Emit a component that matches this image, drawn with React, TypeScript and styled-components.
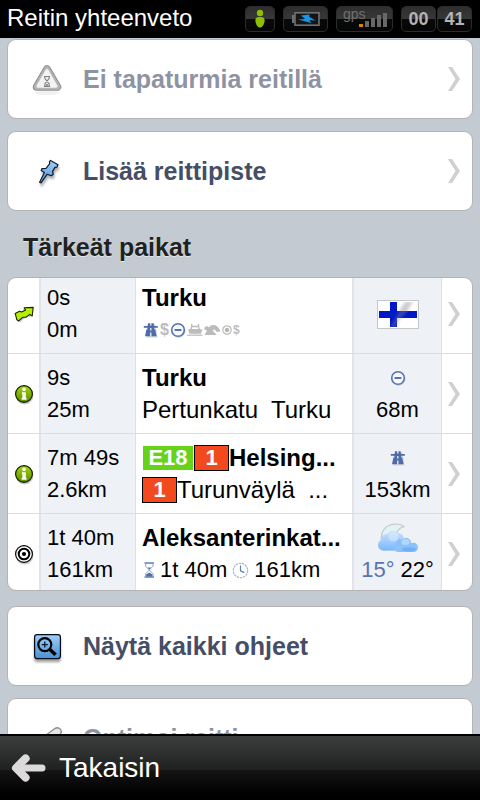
import React from "react";
import styled, { createGlobalStyle, css } from "styled-components";

const GlobalStyle = createGlobalStyle`
  *, *::before, *::after { box-sizing: border-box; }
  html, body { margin: 0; padding: 0; }
  body {
    font-family: "Liberation Sans", Arial, sans-serif;
    background: #c3cad1;
    color: #000;
  }
  svg { display: block; flex: none; }
`;

const Screen = styled.div`
  display: flex;
  flex-direction: column;
  height: 100vh;
`;

/* ---------- status bar ---------- */

const StatusBar = styled.header`
  display: flex;
  align-items: center;
  flex: none;
  height: 38px;
  padding: 0 8px 0 7px;
  background: #000;
  color: #fff;
`;

const Title = styled.h1`
  flex: 1;
  margin: 0;
  font-size: 24px;
  font-weight: 400;
  line-height: 36px;
  height: 38px;
  white-space: nowrap;
`;

const Indicators = styled.div`
  display: flex;
  align-items: center;
  gap: 8px;
`;

const Clock = styled.div`
  display: flex;
  gap: 1px;
`;

const Pill = styled.div<{ $width: number }>`
  display: grid;
  place-items: center;
  width: ${(p) => p.$width}px;
  height: 26px;
  border: 1px solid #2c2c2c;
  border-radius: 5px;
  background: linear-gradient(#2e2e2e 0, #383838 12px, #0a0a0a 12px, #060606 100%);
  color: #b4b4b4;
  font-size: 18px;
  font-weight: 700;
  line-height: 24px;

  > * { grid-area: 1 / 1; }
`;

const GpsLabel = styled.span`
  place-self: start;
  padding-left: 6px;
  color: #707070;
  font-size: 14px;
  font-weight: 400;
  line-height: 14px;
`;

/* ---------- content ---------- */

const Content = styled.main`
  flex: 1;
  min-height: 0;
  overflow-y: auto;
  scrollbar-width: none;
  padding: 1px 7px 12px;
`;

const Menu = styled.nav`
  display: flex;
  flex-direction: column;
  gap: 12px;
`;

const cardFrame = css`
  border: 1px solid #b3b3b3;
  border-radius: 9px;
  background: #fff;
`;

const MenuCard = styled.button`
  ${cardFrame}
  display: flex;
  align-items: center;
  gap: 19px;
  width: 100%;
  height: 80px;
  padding: 0 12px 0 22px;
  color: #454e66;
  font: 700 25px "Liberation Sans", Arial, sans-serif;
  text-align: left;

  &:disabled { color: #8e93a3; }
`;

const MenuLabel = styled.span`
  flex: 1;
  white-space: nowrap;
`;

const SectionTitle = styled.h2`
  margin: 0;
  padding: 6px 16px 0;
  color: #20221f;
  font-size: 25px;
  font-weight: 700;
  line-height: 60px;
  text-shadow: 0 1px 0 #e4e8ec;
`;

const PlaceList = styled.ul`
  ${cardFrame}
  margin: 0 0 15px;
  padding: 0;
  overflow: hidden;
  list-style: none;
`;

const PlaceRow = styled.button`
  display: grid;
  grid-template-columns: 31px 97px minmax(0, 1fr) 90px 30px;
  width: 100%;
  padding: 0;
  border: 0;
  border-bottom: 1px solid #dadde1;
  background: none;
  color: #000;
  font: 400 22px/32px "Liberation Sans", Arial, sans-serif;
  text-align: left;
  white-space: nowrap;
`;

const Cell = styled.span`
  display: flex;
  flex-direction: column;
  justify-content: center;
  padding: 8px 0 7px;
`;

const IconCell = styled(Cell)`
  align-items: center;
`;

const ChevronCell = styled(Cell)`
  align-items: flex-start;
  padding-left: 6px;
`;

const TimeCell = styled(Cell)`
  padding-left: 6px;
  border-left: 2px solid #e2e4e9;
  border-right: 1px solid #dedfe3;
  background: #eef1f6;
`;

const PlaceCell = styled(Cell)`
  padding-left: 6px;
`;

const AsideCell = styled(Cell)`
  align-items: center;
  border-left: 2px solid #e2e4e9;
  border-right: 1px solid #dedfe3;
  background: #eef1f6;
`;

const PlaceItem = styled.li`
  &:first-child ${PlaceRow} > * { padding-top: 4px; }
  &:last-child ${PlaceRow} > * { padding-bottom: 4px; }
  &:last-child ${PlaceRow} { border-bottom: 0; }
`;

const Line = styled.span`
  display: flex;
  align-items: center;
  height: 32px;
`;

const NameLine = styled(Line)`
  font-size: 24px;
  font-weight: 700;
`;

const StreetLine = styled(Line)`
  font-size: 24px;
  white-space: pre;
`;

const FeatureLine = styled(Line)`
  gap: 1px;
  padding-left: 1px;
`;

const TripLine = styled(Line)`
  gap: 5px;
  padding-left: 1px;
`;

const Dollar = styled.span<{ $size: number }>`
  color: #bcbcbc;
  font-size: ${(p) => p.$size}px;
  font-weight: 700;
`;

const RoadBadge = styled.span<{ $kind: "euro" | "main" }>`
  display: flex;
  align-items: center;
  justify-content: center;
  width: ${(p) => (p.$kind === "euro" ? 52 : 35)}px;
  height: 26px;
  border: 1px solid ${(p) => (p.$kind === "euro" ? "#fff" : "#000")};
  background: ${(p) => (p.$kind === "euro" ? "#66d31a" : "#f24a1e")};
  color: #fff;
  font-size: 22px;
  font-weight: 700;
`;

const LowTemp = styled.span`
  color: #5873b0;
`;

/* ---------- bottom bar ---------- */

const BottomBar = styled.footer`
  flex: none;
  height: 66px;
  border-top: 2px solid #000;
  background: linear-gradient(#3d3d3d 0, #1f2121 34px, #151515 34px, #000 58px);
`;

const BackButton = styled.button`
  display: flex;
  align-items: center;
  gap: 12px;
  height: 64px;
  padding: 0 12px 0 11px;
  border: 0;
  background: none;
  color: #fff;
  font: 400 28px "Liberation Sans", Arial, sans-serif;
`;

/* ---------- drawings ---------- */

const Chevron = () => (
  <svg width="12" height="24" viewBox="0 0 12 24" aria-hidden="true">
    <path d="M0 0H4L12 12L4 24H0L7.5 12Z" fill="#d0d0d0" />
  </svg>
);

const PersonIcon = () => (
  <svg width="12" height="20" viewBox="0 0 12 20" aria-hidden="true">
    <circle cx="6" cy="4" r="3.2" fill="#8cbf00" />
    <path d="M6 8C9 7.6 11 9 10.6 12C10.2 15 8.6 18.6 6 18.6S1.8 15 1.4 12C1 9 3 7.6 6 8Z" fill="#8cbf00" />
  </svg>
);

const BatteryIcon = () => (
  <svg width="28" height="16" viewBox="0 0 28 16" aria-hidden="true">
    <rect x="3" y="1.8" width="24" height="12.4" fill="#151515" stroke="#707070" strokeWidth="1.6" />
    <rect x="0" y="4" width="2.4" height="8" fill="#707070" />
    <path d="M9 4.6L17.6 3.6L17.2 5.8L23.6 9.4L17.4 9L19.4 12L6 8.6L13 8Z" fill="#1796e8" />
  </svg>
);

const SignalIcon = () => (
  <svg width="57" height="26" viewBox="336 5 57 26" aria-hidden="true">
    <rect x="358" y="22" width="4" height="3" fill="#d98500" />
    <g fill="#686868">
      <rect x="364" y="19" width="4" height="6" />
      <rect x="370" y="16" width="4" height="9" />
      <rect x="376" y="13" width="4" height="12" />
      <rect x="382" y="11" width="4" height="14" />
    </g>
  </svg>
);

const AccidentIcon = () => (
  <svg width="34" height="36" viewBox="0 0 34 36" aria-hidden="true">
    <ellipse cx="17" cy="32" rx="12" ry="2" fill="#f0f0f0" />
    <path d="M17 8L27.5 26H6.5Z" fill="#8d8d8d" stroke="#8d8d8d" strokeWidth="7.5" strokeLinejoin="round" />
    <path d="M17 8L27.5 26H6.5Z" fill="#b5b5b5" stroke="#b5b5b5" strokeWidth="5.5" strokeLinejoin="round" />
    <path d="M17 9.5L26 25.2H8Z" fill="#f3f3f3" stroke="#f3f3f3" strokeWidth="3" strokeLinejoin="round" />
    <path d="M14 15.5H20M14 25.5H20M14.8 15.5V17.4L19.2 23V25.5M19.2 15.5V17.4L14.8 23V25.5" fill="none" stroke="#808080" strokeWidth="1.1" />
    <path d="M15.4 24.8L17 22.6L18.6 24.8Z" fill="#777" />
  </svg>
);

const PinIcon = () => (
  <svg width="34" height="36" viewBox="30 153 34 36" aria-hidden="true">
    <defs>
      <linearGradient id="pinBlue" x1="0" y1="0" x2="0" y2="1">
        <stop offset="0" stopColor="#a5d2fb" />
        <stop offset="1" stopColor="#4a93d6" />
      </linearGradient>
      <filter id="pinShade" x="-30%" y="-30%" width="170%" height="170%">
        <feDropShadow dx="1" dy="3" stdDeviation="1.2" floodColor="#000" floodOpacity="0.3" />
      </filter>
    </defs>
    <path
      d="M50.5 160.4L58 164.8L56.8 167.2L55 167.4L52.6 171.4L53.2 174.4L51.2 175.8L47.2 174.2L41 183L39.6 182.2L44.4 172.6L41.2 170.4L42 168.6L46 168.4L49.8 163.6L49.4 161.6Z"
      fill="url(#pinBlue)"
      stroke="#0d1a2b"
      strokeWidth="1.2"
      strokeLinejoin="round"
      filter="url(#pinShade)"
    />
  </svg>
);

const ZoomMapIcon = () => (
  <svg width="34" height="36" viewBox="30 628 34 36" aria-hidden="true">
    <defs>
      <linearGradient id="zoomBlue" x1="0" y1="0" x2="0" y2="1">
        <stop offset="0" stopColor="#9fcffa" />
        <stop offset="1" stopColor="#4a90d3" />
      </linearGradient>
      <filter id="zoomShade" x="-20%" y="-20%" width="140%" height="150%">
        <feDropShadow dx="0" dy="3" stdDeviation="1.2" floodColor="#000" floodOpacity="0.35" />
      </filter>
    </defs>
    <rect x="34.6" y="634.6" width="25.8" height="24" rx="2.5" fill="url(#zoomBlue)" stroke="#060c14" strokeWidth="1.2" filter="url(#zoomShade)" />
    <circle cx="44.8" cy="644.6" r="6.5" fill="none" stroke="#000" strokeWidth="2.2" />
    <path d="M41.8 644.6H47.8M44.8 641.6V647.6" stroke="#0b1a2c" strokeWidth="1.3" />
    <path d="M49.6 649.2L55.6 654.8" stroke="#000" strokeWidth="3.6" />
  </svg>
);

const PencilIcon = () => (
  <svg width="34" height="36" viewBox="0 0 34 36" aria-hidden="true">
    <path d="M8 27L11 19L23.4 9.4C25.6 7.6 27.6 7 29.6 8.6C31.6 10.4 32 12 30.4 13.8L16 26Z" fill="#e6e6e6" stroke="#8f8f8f" strokeWidth="1.3" strokeLinejoin="round" />
  </svg>
);

const StartIcon = () => (
  <svg width="22" height="20" viewBox="12 304 22 20" aria-hidden="true">
    <path d="M14.4 314.8L23 311L22 308.6L32.2 308.4L29.2 317.4L26.8 315.4L18.6 322.6Z" fill="#c4c4c4" />
    <path
      d="M14.2 313.4L18.6 311.2L20.6 312L24.6 310L23.2 307.8L32.2 307.4L31.2 316L28.8 314.4L25 317.2L22 317.2L17.4 321L15.8 319.6Z"
      fill="#b4f000"
      stroke="#1a2400"
      strokeWidth="1.1"
      strokeLinejoin="round"
    />
  </svg>
);

const InfoIcon = () => (
  <svg width="22" height="22" viewBox="0 0 22 22" aria-hidden="true">
    <defs>
      <linearGradient id="infoGreen" x1="0" y1="0" x2="0" y2="1">
        <stop offset="0" stopColor="#a3d900" />
        <stop offset="1" stopColor="#5c8c00" />
      </linearGradient>
    </defs>
    <circle cx="11.5" cy="12.6" r="9" fill="#cfcfcf" />
    <circle cx="11" cy="11" r="8.4" fill="url(#infoGreen)" stroke="#111a00" strokeWidth="1.2" />
    <circle cx="11" cy="6.4" r="1.8" fill="#fff" />
    <path d="M8.8 9.2H12.8V14.8H13.6V16.8H8.6V14.8H9.4V11H8.8Z" fill="#fff" />
  </svg>
);

const TargetIcon = () => (
  <svg width="22" height="22" viewBox="0 0 22 22" aria-hidden="true">
    <circle cx="11.5" cy="12.6" r="9" fill="#cfcfcf" />
    <circle cx="11" cy="11" r="8.4" fill="#fff" stroke="#000" strokeWidth="1.2" />
    <circle cx="11" cy="11" r="5.3" fill="none" stroke="#000" strokeWidth="2" />
    <circle cx="11" cy="11" r="2.1" fill="#000" />
  </svg>
);

const MotorwayIcon = () => (
  <svg width="16" height="16" viewBox="0 0 16 16" aria-hidden="true">
    <path d="M5.4 2H12L14.6 15.4H3.4Z" fill="#d0d3da" />
    <path d="M5 1.2H10.6L11 4H14.8V5.8H11.2V7.4H12.2L13.6 14.2H2L3.4 7.4H4.4V5.8H.8V4H4.6Z" fill="#4f6ca8" />
    <path d="M7.8 1V3.6M7.8 6V8.6M7.8 10.6V14.4" stroke="#eef1f6" strokeWidth="1.3" />
  </svg>
);

const NoTollIcon = () => (
  <svg width="16" height="16" viewBox="0 0 16 16" aria-hidden="true">
    <circle cx="8.6" cy="8.8" r="6.2" fill="none" stroke="#d3d6dc" strokeWidth="1.8" />
    <circle cx="8" cy="8" r="6.3" fill="#f6f8fc" stroke="#5873b0" strokeWidth="1.6" />
    <path d="M4.6 8H11.4" stroke="#5873b0" strokeWidth="1.9" />
  </svg>
);

const FerryIcon = () => (
  <svg width="16" height="14" viewBox="0 0 16 14" aria-hidden="true">
    <path d="M4 1H5.4V2.8H10.8V1H12.2V3.4L13 6.2H15.4L14 10.8H2.4L1 6.2H3.2L4 3.4ZM5.2 4.2L4.8 6H11.6L11.2 4.2Z" fill="#bcbcbc" fillRule="evenodd" />
    <path d="M0 12.2H15.4" stroke="#c8c8c8" strokeWidth="1.4" />
  </svg>
);

const TunnelIcon = () => (
  <svg width="17" height="14" viewBox="0 0 17 14" aria-hidden="true">
    <path d="M.4 4.6C1.6 3 4 3 5 4.4C7.4.6 14 1.2 16.4 8.4L12.8 9L10.6 6.4L8.4 7.2L12.8 12H.6L3 7.6L.4 6.6Z" fill="#bcbcbc" />
  </svg>
);

const VignetteIcon = () => (
  <svg width="10" height="10" viewBox="0 0 10 10" aria-hidden="true">
    <circle cx="5" cy="5" r="4.2" fill="none" stroke="#bcbcbc" strokeWidth="1.2" />
    <circle cx="5" cy="5" r="2.3" fill="#b8b8b8" />
  </svg>
);

const HourglassIcon = () => (
  <svg width="12" height="16" viewBox="0 0 12 16" aria-hidden="true">
    <path d="M1.5 1H11M1.5 15H11" stroke="#5f7bb8" strokeWidth="1.4" />
    <path d="M2.6 1.5V4.2L10 11.8V14.5M10 1.5V4.2L2.6 11.8V14.5" fill="none" stroke="#8fa4d0" strokeWidth="1" />
    <path d="M3.2 14.4V12.6L6.3 10.4L9.4 12.6V14.4ZM4.6 5.4H8L6.3 7.4Z" fill="#4f6ca8" />
  </svg>
);

const ClockIcon = () => (
  <svg width="17" height="17" viewBox="0 0 17 17" aria-hidden="true">
    <circle cx="8.5" cy="8.5" r="7.2" fill="#fff" stroke="#a3b3d6" strokeWidth="1.2" strokeDasharray="2.4 0.8" />
    <path d="M8.5 3.4V8.8L12.4 10.6" fill="none" stroke="#5f7bb8" strokeWidth="1.2" />
  </svg>
);

const FlagIcon = () => (
  <svg width="42" height="29" viewBox="0 0 42 29" role="img" aria-label="Suomi">
    <defs>
      <filter id="sheenBlur" x="-30%" y="-10%" width="160%" height="120%">
        <feGaussianBlur stdDeviation="1.6" />
      </filter>
      <clipPath id="flagArea">
        <rect x="2" y="2" width="38" height="25" />
      </clipPath>
    </defs>
    <rect x="0.5" y="0.5" width="41" height="28" fill="#fff" stroke="#c4c6c8" />
    <path d="M13 2H20V11H40V18H20V27H13V18H2V11H13Z" fill="#0018c8" />
    <g clipPath="url(#flagArea)">
      <path d="M13 28L25 6L29 1H36L30 12L22 20L18 28Z" fill="#8a8486" opacity="0.4" filter="url(#sheenBlur)" />
    </g>
  </svg>
);

const WeatherIcon = () => (
  <svg width="42" height="30" viewBox="0 0 42 30" role="img" aria-label="Puolipilvistä">
    <defs>
      <linearGradient id="cloudBlue" gradientUnits="userSpaceOnUse" x1="0" y1="7" x2="0" y2="29">
        <stop offset="0" stopColor="#cfe5fd" />
        <stop offset="1" stopColor="#74b4fa" />
      </linearGradient>
    </defs>
    <path d="M27 3.4C21 -.4 12 .2 7 6.4C2.8 12 3.6 20 8 24L20 24C15.600 16 18.4 6.400 27 3.4Z" fill="#e2f3f7" stroke="#c6c9c9" strokeWidth="1.2" />
    <g fill="url(#cloudBlue)">
      <circle cx="6.600" cy="22" r="5.600" />
      <circle cx="9.600" cy="16.400" r="5.400" />
      <circle cx="16.600" cy="14" r="6.600" />
      <circle cx="22.400" cy="15" r="4.200" />
      <rect x="6" y="15" width="16" height="12.600" />
    </g>
    <g fill="#8cc1fb">
      <circle cx="21.400" cy="24.400" r="4.600" />
      <circle cx="22.600" cy="20.200" r="4" />
      <circle cx="29" cy="20" r="5.200" />
      <circle cx="36.400" cy="24.400" r="4.600" />
      <rect x="21" y="20" width="15.600" height="9" />
    </g>
    <circle cx="16.500" cy="13.600" r="5" fill="#dcecfe" opacity="0.55" />
    <ellipse cx="28.600" cy="19" rx="4" ry="3" fill="#c3dffd" opacity="0.7" />
    <ellipse cx="32" cy="26.400" rx="7" ry="2.200" fill="#5ca6f7" opacity="0.6" />
  </svg>
);

const BackArrow = () => (
  <svg width="36" height="30" viewBox="0 0 36 30" aria-hidden="true">
    <path d="M14.600 5.400L5 15L14.600 24.600" fill="none" stroke="#dcdadb" strokeWidth="8" strokeLinecap="round" strokeLinejoin="round" />
    <path d="M7 15H31" fill="none" stroke="#dcdadb" strokeWidth="7" strokeLinecap="round" />
  </svg>
);

/* ---------- page ---------- */

interface Place {
  icon: React.ReactNode;
  time: string;
  distance: string;
  details: React.ReactNode;
  aside: React.ReactNode;
}

const places: Place[] = [
  {
    icon: <StartIcon />,
    time: "0s",
    distance: "0m",
    details: (
      <>
        <NameLine>Turku</NameLine>
        <FeatureLine>
          <MotorwayIcon />
          <Dollar $size={16}>$</Dollar>
          <NoTollIcon />
          <FerryIcon />
          <TunnelIcon />
          <VignetteIcon />
          <Dollar $size={12}>$</Dollar>
        </FeatureLine>
      </>
    ),
    aside: <FlagIcon />,
  },
  {
    icon: <InfoIcon />,
    time: "9s",
    distance: "25m",
    details: (
      <>
        <NameLine>Turku</NameLine>
        <StreetLine>{"Pertunkatu  Turku"}</StreetLine>
      </>
    ),
    aside: (
      <>
        <Line><NoTollIcon /></Line>
        <Line>68m</Line>
      </>
    ),
  },
  {
    icon: <InfoIcon />,
    time: "7m 49s",
    distance: "2.6km",
    details: (
      <>
        <NameLine>
          <RoadBadge $kind="euro">E18</RoadBadge>
          <RoadBadge $kind="main">1</RoadBadge>
          Helsing...
        </NameLine>
        <StreetLine>
          <RoadBadge $kind="main">1</RoadBadge>
          {"Turunväylä  ..."}
        </StreetLine>
      </>
    ),
    aside: (
      <>
        <Line><MotorwayIcon /></Line>
        <Line>153km</Line>
      </>
    ),
  },
  {
    icon: <TargetIcon />,
    time: "1t 40m",
    distance: "161km",
    details: (
      <>
        <NameLine>Aleksanterinkat...</NameLine>
        <TripLine>
          <HourglassIcon />
          <span>1t 40m</span>
          <ClockIcon />
          <span>161km</span>
        </TripLine>
      </>
    ),
    aside: (
      <>
        <Line><WeatherIcon /></Line>
        <Line><span><LowTemp>15°</LowTemp> 22°</span></Line>
      </>
    ),
  },
];

export default function App() {
  return (
    <>
      <GlobalStyle />
      <Screen>
        <StatusBar>
          <Title>Reitin yhteenveto</Title>
          <Indicators>
            <Pill $width={30}><PersonIcon /></Pill>
            <Pill $width={45}><BatteryIcon /></Pill>
            <Pill $width={57}>
              <SignalIcon />
              <GpsLabel>gps</GpsLabel>
            </Pill>
            <Clock>
              <Pill $width={35}>00</Pill>
              <Pill $width={35}>41</Pill>
            </Clock>
          </Indicators>
        </StatusBar>

        <Content>
          <Menu>
            <MenuCard type="button" disabled>
              <AccidentIcon />
              <MenuLabel>Ei tapaturmia reitillä</MenuLabel>
              <Chevron />
            </MenuCard>
            <MenuCard type="button">
              <PinIcon />
              <MenuLabel>Lisää reittipiste</MenuLabel>
              <Chevron />
            </MenuCard>
          </Menu>

          <SectionTitle>Tärkeät paikat</SectionTitle>
          <PlaceList>
            {places.map((place, index) => (
              <PlaceItem key={index}>
                <PlaceRow type="button">
                  <IconCell>{place.icon}</IconCell>
                  <TimeCell>
                    <Line>{place.time}</Line>
                    <Line>{place.distance}</Line>
                  </TimeCell>
                  <PlaceCell>{place.details}</PlaceCell>
                  <AsideCell>{place.aside}</AsideCell>
                  <ChevronCell><Chevron /></ChevronCell>
                </PlaceRow>
              </PlaceItem>
            ))}
          </PlaceList>

          <Menu>
            <MenuCard type="button">
              <ZoomMapIcon />
              <MenuLabel>Näytä kaikki ohjeet</MenuLabel>
            </MenuCard>
            <MenuCard type="button" disabled>
              <PencilIcon />
              <MenuLabel>Optimoi reitti</MenuLabel>
            </MenuCard>
          </Menu>
        </Content>

        <BottomBar>
          <BackButton type="button">
            <BackArrow />
            Takaisin
          </BackButton>
        </BottomBar>
      </Screen>
    </>
  );
}
